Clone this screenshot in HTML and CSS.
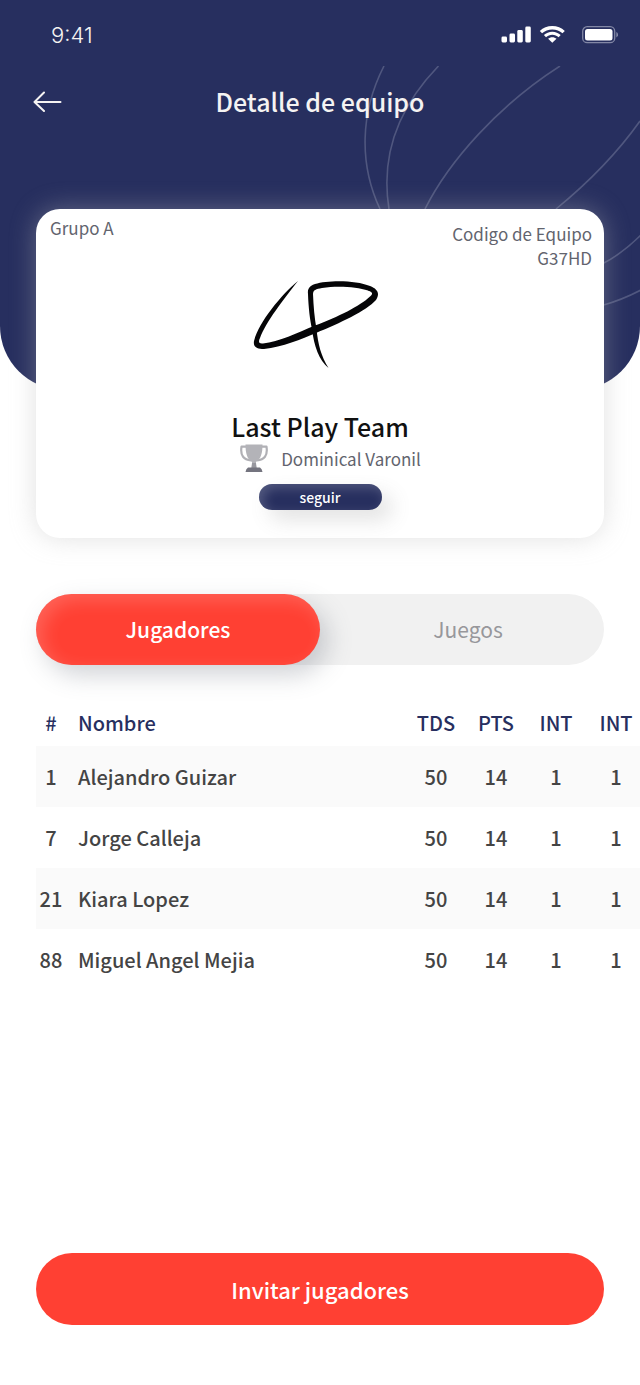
FILE: index.html
```html
<!DOCTYPE html>
<html lang="es">
<head>
<meta charset="utf-8">
<meta name="viewport" content="width=device-width, initial-scale=1">
<title>Detalle de equipo</title>
<link rel="stylesheet" href="styles.css">
</head>
<body>
<div class="screen">
  <div class="backdrop" aria-hidden="true">
    <svg class="backdrop-lines" width="280" height="324" viewBox="360 66 280 324" fill="none" stroke="#50577f" stroke-width="1.6">
      <path d="M384 66C360 113 359 164 380 209"/>
      <path d="M438.500 66C396 110 381 159 389 209"/>
      <path d="M560 66C499 105 449 161 425 209"/>
      <path d="M640 121C618 152 589 182 556 209"/>
      <path d="M602 264C616 257 629 247 641 235"/>
      <path d="M602 305.500Q622 300 641 290"/>
    </svg>
  </div>

  <header class="top">
    <div class="status">
      <span class="time">9:41</span>
      <div class="status-icons">
        <svg width="118" height="20" viewBox="0 0 118 20" fill="#fff" aria-hidden="true">
          <rect x="1.500" y="11.500" width="5.500" height="6" rx="1.400"/>
          <rect x="9.500" y="8.500" width="5.500" height="9" rx="1.400"/>
          <rect x="17.300" y="5" width="5.500" height="12.500" rx="1.400"/>
          <rect x="25.300" y="1.500" width="5.500" height="16" rx="1.400"/>
          <path d="M52.300 4.400C56.200 4.400 59.800 5.900 62.500 8.300L64.800 5.900C61.500 2.900 57.100 1 52.300 1S43.100 2.900 39.800 5.900L42.100 8.300C44.800 5.900 48.400 4.400 52.300 4.400Z"/>
          <path d="M52.300 9.800C54.700 9.800 56.900 10.700 58.600 12.200L60.700 10C58.500 8 55.500 6.700 52.300 6.700S46.100 8 43.900 10L46 12.200C47.700 10.700 49.900 9.800 52.300 9.800Z"/>
          <path d="M52.300 12.200C50.700 12.200 49.200 12.800 48.100 13.800L52.300 17.800L56.500 13.800C55.400 12.800 53.900 12.200 52.300 12.200Z"/>
          <rect x="82.700" y="1.700" width="32" height="16" rx="4.500" fill="none" stroke="#8287a5" stroke-width="1.300"/>
          <rect x="85" y="4" width="27.500" height="11.500" rx="2.500"/>
          <path d="M116.300 7v5.500a3 3 0 0 0 0-5.500Z" fill="#8287a5"/>
        </svg>
      </div>
    </div>
    <div class="nav">
      <button class="back" type="button" aria-label="Volver">
        <svg width="30" height="22" viewBox="0 0 30 22" fill="none" stroke="#f5f3f2" stroke-width="2" stroke-linecap="round" stroke-linejoin="round" aria-hidden="true"><path d="M28.500 12H3M12 2.500L2.500 12L12 21"/></svg>
      </button>
      <h1 class="title">Detalle de equipo</h1>
    </div>
  </header>

  <main class="content">
    <section class="card">
      <div class="card-meta">
        <span class="group">Grupo A</span>
        <p class="code">Codigo de Equipo<br>G37HD</p>
      </div>
      <svg class="logo" width="136" height="90" viewBox="252 279 136 90" fill="#050507" role="img" aria-label="Last Play">
        <path d="M298 281C281 295 259 322 254 341C253 347 257 349 264 349C282 347 302 339 316 333C340 323 366 311 376 300C380 294 378 289 370 286L368 290.500C373 292 373 294 370 296.500C360 306 338 317 315 325.500C297 333 279 342 263 343.500C259 344 258 342 260 338C266 322 283 300 298 281Z"/>
        <path d="M370 286C356 280 328 280 315 284C309 286 307.500 289 308 294C308.500 308 310 320 312 329C314 346 319 360 328.500 368C321 356 318 344 316.500 329C314.500 318 313.500 306 313 294C313 290 316 289 322 288C338 285.500 357 287 368 290.500L371 291Z"/>
      </svg>
      <h2 class="team">Last Play Team</h2>
      <div class="league">
        <svg width="30" height="30" viewBox="0 0 30 30" aria-hidden="true">
          <path d="M7 3.700H2.500C1 13 5 16.500 12 17.500M23 3.700h4.500C29 13 25 16.500 18 17.500" fill="none" stroke="#b0b0b5" stroke-width="2.200" stroke-linejoin="round"/>
          <path d="M6.500 1.500H23.500C23.500 10 22 16 17 19V25H13V19C8 16 6.500 10 6.500 1.500Z" fill="#b3b3b8"/>
          <path d="M13 20h4l.7 5h-5.400Z" fill="#98989f"/>
          <path d="M9 24.500h12q2 1 2.500 4.500h-17Q7 25.500 9 24.500Z" fill="#74747f"/>
        </svg>
        <span class="league-name">Dominical Varonil</span>
      </div>
      <button class="follow" type="button">seguir</button>
    </section>

    <div class="tabs" role="tablist">
      <button class="tab tab-active" type="button" role="tab" aria-selected="true">Jugadores</button>
      <button class="tab tab-idle" type="button" role="tab" aria-selected="false">Juegos</button>
    </div>
  </main>

  <div class="table-wrap">
    <table class="players">
      <thead>
        <tr><th class="num">#</th><th class="name">Nombre</th><th class="stat">TDS</th><th class="stat">PTS</th><th class="stat">INT</th><th class="stat">INT</th></tr>
      </thead>
      <tbody>
        <tr><td>1</td><td class="name">Alejandro Guizar</td><td>50</td><td>14</td><td>1</td><td>1</td></tr>
        <tr><td>7</td><td class="name">Jorge Calleja</td><td>50</td><td>14</td><td>1</td><td>1</td></tr>
        <tr><td>21</td><td class="name">Kiara Lopez</td><td>50</td><td>14</td><td>1</td><td>1</td></tr>
        <tr><td>88</td><td class="name">Miguel Angel Mejia</td><td>50</td><td>14</td><td>1</td><td>1</td></tr>
      </tbody>
    </table>
  </div>

  <footer class="actions">
    <button class="invite" type="button">Invitar jugadores</button>
  </footer>
</div>
</body>
</html>
```
FILE: styles.css
```css
* { box-sizing: border-box; }

body {
  margin: 0;
  background: #fff;
  color: #444;
  font-family: "Noto Sans CJK SC", "Noto Sans", sans-serif;
  font-weight: 500;
}

button {
  margin: 0;
  padding: 0;
  border: 0;
  background: none;
  color: inherit;
  font: inherit;
  cursor: pointer;
}

h1, h2, p { margin: 0; }

svg { display: block; }

.screen {
  position: relative;
  display: flex;
  flex-direction: column;
  min-height: 100vh;
  overflow: hidden;
}

.backdrop {
  position: absolute;
  top: 0;
  left: 0;
  right: 0;
  height: 390px;
  overflow: hidden;
  border-radius: 0 0 64px 64px;
  background: #272f5f;
}

.backdrop-lines {
  position: absolute;
  right: 0;
  bottom: 0;
}

.top,
.content,
.table-wrap,
.actions { position: relative; }

.status {
  display: flex;
  align-items: center;
  justify-content: space-between;
  height: 70px;
  padding: 0 22px 0 51px;
}

.time {
  color: #f5f3f2;
  font: 300 22px/28px Inter, sans-serif;
}

.nav {
  display: grid;
  grid-template-columns: 32px 1fr 32px;
  align-items: center;
  height: 62px;
  padding: 0 32px;
}

.title {
  color: #f5f3f2;
  font-size: 25px;
  font-weight: 500;
  line-height: 36px;
  text-align: center;
}

.content {
  display: flex;
  flex-direction: column;
  gap: 56px;
  padding: 77px 36px 0;
}

.card {
  display: flex;
  flex-direction: column;
  align-items: center;
  padding: 7px 0 28px;
  border-radius: 24px;
  background: #fff;
  box-shadow: 0 0 26px rgba(184, 184, 184, .42);
}

.card-meta {
  display: flex;
  align-items: flex-start;
  justify-content: space-between;
  width: 100%;
  padding: 0 12px 0 14px;
  color: #62646e;
  font-size: 17px;
  font-weight: 400;
  line-height: 24px;
}

.code {
  padding-top: 6px;
  text-align: right;
}

.logo { margin-top: 9px; }

.team {
  margin-top: 40px;
  color: #111;
  font-size: 25px;
  font-weight: 500;
  line-height: 34px;
}

.league {
  display: flex;
  align-items: center;
  gap: 12px;
  height: 30px;
  padding-left: 20px;
  color: #62646e;
  font-size: 17px;
  font-weight: 400;
}

.follow {
  width: 123px;
  height: 26px;
  margin-top: 11px;
  border-radius: 13px;
  background: #272f5f;
  box-shadow: 10px 10px 20px rgba(100, 100, 100, .18), inset 4px 4px 12px rgba(255, 255, 255, .2);
  color: #fff;
  font-size: 14px;
  line-height: 24px;
}

.tabs {
  display: grid;
  grid-template-columns: 1fr 1fr;
  border-radius: 36px;
  background: #f1f1f1;
}

.tab {
  height: 71px;
  padding-bottom: 2px;
  border-radius: 36px;
  color: #97979b;
  font-size: 21px;
  font-weight: 400;
}

.tab-idle { padding-left: 12px; }

.tab-active {
  background: #ff4033;
  box-shadow: 8px 10px 24px rgba(90, 98, 112, .28), inset 6px 6px 18px rgba(255, 255, 255, .18);
  color: #fff;
  font-weight: 500;
}

.table-wrap {
  margin-top: 36px;
  padding-left: 36px;
  overflow-x: auto;
  scrollbar-width: none;
}

.players {
  width: calc(100% + 6px);
  border-collapse: collapse;
  table-layout: fixed;
  font-size: 20px;
  line-height: 24px;
  text-align: center;
}

.players th {
  height: 45px;
  padding: 0 0 2px;
  color: #272f5f;
  font-weight: 500;
}

.players td {
  height: 61px;
  padding: 0;
}

.players .num { width: 30px; }

.players .stat { width: 60px; }

.players .name {
  padding-left: 12px;
  text-align: left;
}

.players tbody tr:nth-child(odd) { background: #fafafa; }

.actions {
  margin-top: auto;
  padding: 40px 36px 60px;
}

.invite {
  width: 100%;
  height: 72px;
  border-radius: 36px;
  background: #ff4033;
  color: #fff;
  font-size: 22px;
}
```
